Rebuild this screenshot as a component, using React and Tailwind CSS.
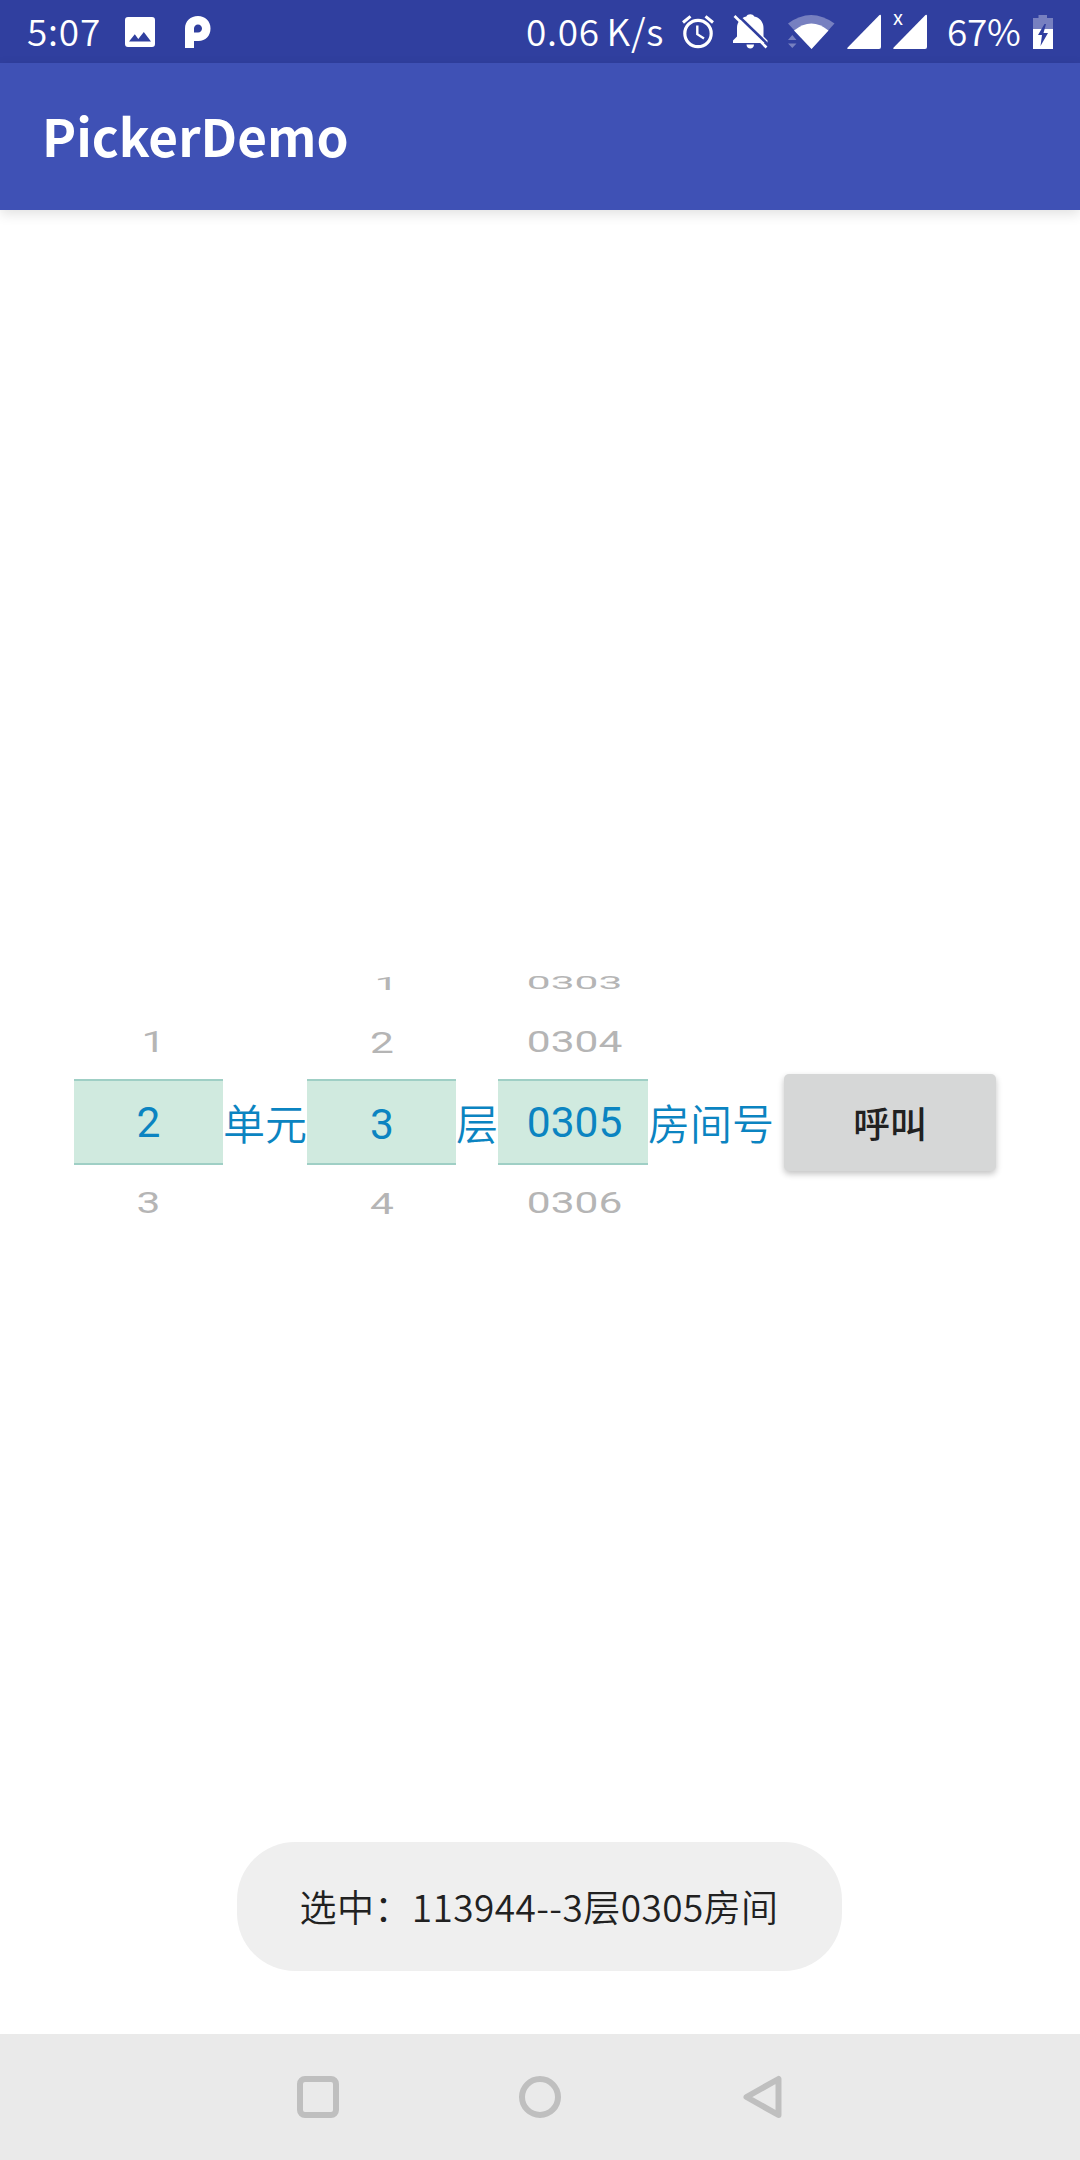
const CJK = "font-['Noto_Sans_CJK_SC',sans-serif]";

function ImageIcon() {
  return (
    <svg className="ml-[24px] h-[30px] w-[30px]" viewBox="0 0 30 30">
      <path
        fill="#fff"
        fillRule="evenodd"
        d="M3 0H27Q30 0 30 3V27Q30 30 27 30H3Q0 30 0 27V3Q0 0 3 0ZM4 24.5H26L18.8 15L13.3 22L9.8 17.2Z"
      />
    </svg>
  );
}

function ParkingIcon() {
  return (
    <svg className="ml-[30px] h-[32px] w-[26px]" viewBox="0 0 26 32">
      <path
        fill="#fff"
        fillRule="evenodd"
        d="M0 32V12.500C0 5 5.500 0 13 0C20 0 25.500 5 25.500 12.500C25.500 20 20.500 25 13.500 25H9V32ZM9 16.500H13C15.500 16.500 17 14.800 17 12.500C17 10.200 15.300 8.500 13 8.500C10.700 8.500 9 10.200 9 12.500Z"
      />
    </svg>
  );
}

function AlarmIcon() {
  return (
    <svg className="ml-[18px] h-[34px] w-[32px]" viewBox="0 0 32 34" fill="none" stroke="#fff">
      <circle cx="16" cy="18.500" r="13.200" strokeWidth="3.200" />
      <path d="M1 7.500L8.500 1.300M31 7.500L23.500 1.300" strokeWidth="3" />
      <path d="M15.300 10.500V19.200L22 23.400" strokeWidth="2.400" />
    </svg>
  );
}

function BellOffIcon() {
  return (
    <svg className="ml-[19px] h-[36px] w-[36px]" viewBox="0 0 36 36">
      <path
        fill="#fff"
        d="M0 29V26.500L4 22.500V14C4 8 8 3.500 13.300 2.500C14 1 15.500 .3 17.300 .3C19 .3 20.500 1 21.300 2.500C26.500 3.500 30.500 8 30.500 14V22.500L34.500 26.500V29ZM13.500 30.500H21C21 33 19.300 34.500 17.300 34.500C15.300 34.500 13.500 33 13.500 30.500Z"
      />
      <path d="M3 -.5L37 32.500" stroke="#303f9f" strokeWidth="2.600" />
      <path d="M-2 -1V8L5 8L5 5Z" fill="#303f9f" />
      <path d="M1.500 2L33.500 33.500" stroke="#fff" strokeWidth="2.600" />
    </svg>
  );
}

function WifiIcon() {
  return (
    <svg className="ml-[18px] h-[36px] w-[48px]" viewBox="0 0 48 36">
      <path fill="#7780c0" d="M1 9.500Q24 -7.500 47.500 9.500L24.500 35Z" />
      <path fill="#303f9f" d="M0 36V20H12L24 34V36Z" />
      <path fill="#fff" d="M7 16.500Q24.500 2.500 41.500 16.500L24.500 35Z" />
      <path fill="#7780c0" d="M5.300 21L9.500 26H1ZM5.300 34L1 29.500H9.500Z" />
    </svg>
  );
}

function SignalIcon({ className }) {
  return (
    <svg className={className} viewBox="0 0 34 35">
      <path fill="#fff" d="M32.500 1Q34 0 34 2V33Q34 35 32 35H1Q-.5 35 .7 33.500Z" />
    </svg>
  );
}

function BatteryIcon() {
  return (
    <svg className="ml-[13px] h-[34px] w-[20px]" viewBox="0 0 20 34">
      <path fill="#7780c0" d="M5.500 0H14V3H20V15H0V3H5.500Z" />
      <path fill="#fff" d="M0 14H20V34H0Z" />
      <path fill="#303f9f" d="M11.500 9L5 20H9L7.500 31L15 18H10.500L13 9Z" />
    </svg>
  );
}

function StatusBar() {
  return (
    <div className={`${CJK} flex h-[63px] items-center bg-[#303f9f] pl-[27px] pr-[27px] text-[37px] leading-[61px] text-white`}>
      <span className="w-[74px] -translate-y-px whitespace-nowrap font-[350] tracking-[0.8px]">5:07</span>
      <ImageIcon />
      <ParkingIcon />
      <div className="ml-auto flex items-center">
        <span className="-translate-y-px whitespace-nowrap font-[350] tracking-[0.7px] [word-spacing:-2px]">0.06 K/s</span>
        <AlarmIcon />
        <BellOffIcon />
        <WifiIcon />
        <SignalIcon className="ml-[12px] h-[35px] w-[34px]" />
        <div className="relative ml-[12px]">
          <SignalIcon className="h-[35px] w-[34px]" />
          <span className="absolute left-0 -top-[6px] text-[20px] leading-[18px]">x</span>
        </div>
        <span className="ml-[20px] w-[73px] -translate-y-px whitespace-nowrap font-[350] tracking-[-0.3px]">67%</span>
        <BatteryIcon />
      </div>
    </div>
  );
}

/* The narrow "1" sits slightly right of centre in the unselected rows. */
function Faded({ value, shift, className }) {
  return (
    <div className={`${className} ${value === "1" ? "pl-[10px]" : shift}`}>{value}</div>
  );
}

function Wheel({ far = "", before, selected, after, shift = "pl-0", nudge = "translate-y-px", outerNudge = "", width = "w-[149px]" }) {
  return (
    <div className={`${width} text-center font-[Roboto,sans-serif] text-[42.500px] text-[#b5b5b5]`}>
      <div className={`h-[60px] leading-[60px] ${outerNudge}`}>
        <Faded value={far} shift={shift} className="scale-y-[0.42]" />
      </div>
      <div className={`h-[66px] leading-[58px] ${outerNudge}`}>
        <Faded value={before} shift={shift} className="scale-y-[0.7]" />
      </div>
      <div className="h-[86px] border-y-2 border-[#9fcfc5] bg-[#d0eadf] leading-[82px] text-[#0b84c1]">
        <div className={`${shift} ${nudge}`}>{selected}</div>
      </div>
      <div className={`h-[68px] pt-2 leading-[60px] ${outerNudge}`}>
        <Faded value={after} shift={shift} className="scale-y-[0.7]" />
      </div>
    </div>
  );
}

function Label({ children }) {
  return (
    <span className={`${CJK} mt-[126px] whitespace-nowrap text-[42px] font-[350] leading-[86px] text-[#0b84c1]`}>
      {children}
    </span>
  );
}

export default function App() {
  return (
    <div className="flex h-[2160px] w-[1080px] flex-col overflow-hidden bg-white">
      <StatusBar />
      <header className={`${CJK} z-10 flex h-[147px] shrink-0 items-center bg-[#3f51b5] pb-[2px] pl-[42px] text-[51.300px] font-bold text-white shadow-[0_4px_12px_rgba(0,0,0,0.12)]`}>
        PickerDemo
      </header>
      <main className="flex flex-1 flex-col items-center pt-[743px]">
        <div className="flex w-full items-start pl-[74px]">
          <Wheel before="1" selected="2" after="3" />
          <Label>单元</Label>
          <Wheel far="1" before="2" selected="3" after="4" shift="pl-px" nudge="translate-y-[3px]" outerNudge="translate-y-px" />
          <Label>层</Label>
          <Wheel far="0303" before="0304" selected="0305" after="0306" shift="pl-[3px]" width="w-[150px]" />
          <Label>房间号</Label>
          <button className={`${CJK} ml-[10px] mt-[121px] h-[97px] w-[212px] rounded-[5px] bg-[#d6d7d7] text-[36.750px] font-medium text-[#212121] shadow-[0_3px_6px_rgba(0,0,0,0.24)]`}>
            呼叫
          </button>
        </div>
        <div className={`${CJK} mb-[63px] mr-[2px] mt-auto flex h-[129px] w-[605px] items-center justify-center rounded-[58px] bg-[#efefef] text-[37px] font-[350] tracking-[0.43px] text-[#212121]`}>
          <span className="whitespace-nowrap">选中：113944--3层0305房间</span>
        </div>
      </main>
      <nav className="flex h-[126px] items-center bg-[#eaeaea] px-[207px]">
        <div className="flex flex-1 justify-center">
          <svg className="h-[44px] w-[44px]" viewBox="0 0 44 44" fill="none" stroke="#bfbfbf" strokeWidth="6">
            <rect x="4" y="4" width="36" height="36" rx="5" />
          </svg>
        </div>
        <div className="flex flex-1 justify-center">
          <svg className="h-[44px] w-[44px]" viewBox="0 0 44 44" fill="none" stroke="#bfbfbf" strokeWidth="6">
            <circle cx="22" cy="22" r="18" />
          </svg>
        </div>
        <div className="flex flex-1 justify-center">
          <svg className="h-[44px] w-[44px]" viewBox="0 0 44 44" fill="none" stroke="#bfbfbf" strokeWidth="6" strokeLinejoin="round">
            <path d="M38.500 4V40L6.500 22Z" />
          </svg>
        </div>
      </nav>
    </div>
  );
}
